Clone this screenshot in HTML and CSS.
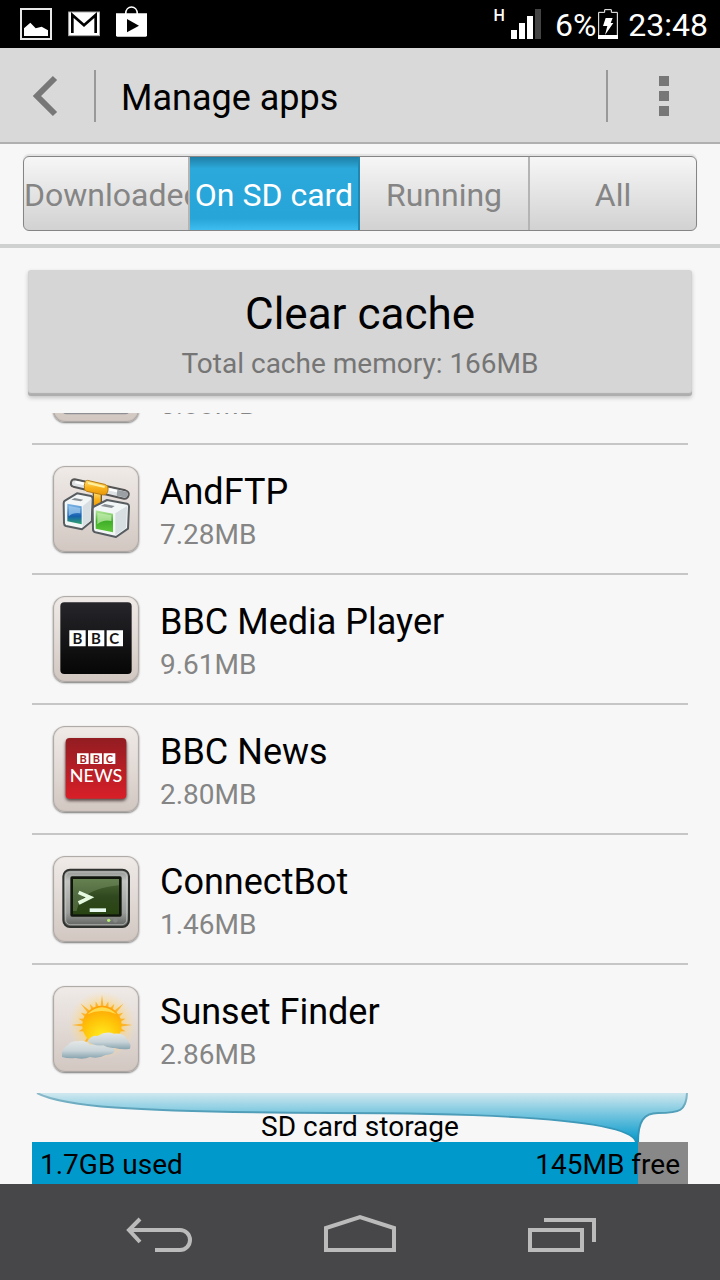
FILE: index.html
```html
<!DOCTYPE html>
<html lang="en">
<head>
<meta charset="utf-8">
<meta name="viewport" content="width=device-width, initial-scale=1">
<title>Manage apps</title>
<link rel="stylesheet" href="styles.css">
</head>
<body>
<div class="status">
  <div class="status-group notices">
    <svg width="32" height="32" viewBox="0 0 96 96"><rect x="3" y="3" width="90" height="90" fill="none" stroke="#e8e8e8" stroke-width="6"/><path d="M12 84V61l19-17 16 17 18-5 19 11v17z" fill="#fff"/></svg>
    <svg width="32" height="32" viewBox="0 0 96 96"><rect x="2" y="12" width="93" height="71" fill="#fff" stroke="#aaa" stroke-width="3"/><path d="M13 75V21l35 31 35-31v54" fill="none" stroke="#000" stroke-width="8"/></svg>
    <svg width="31" height="36" viewBox="0 0 93 108"><path d="M29 24C29-4 64-4 64 24" fill="none" stroke="#fff" stroke-width="5"/><path d="M0 22h93v66q0 4-4 4H4q-4 0-4-4z" fill="#fff"/><path d="M33 39l36 20-36 20z" fill="#000"/></svg>
  </div>
  <div class="status-group readings">
    <span class="network">H</span>
    <svg class="signal" width="30" height="30" viewBox="0 0 30 30"><path d="M0 21h6v9H0zM8 14h6v16H8zM16 7h6v23h-6z" fill="#fff"/><path d="M24 0h6v30h-6z" fill="#444"/></svg>
    <span class="reading">6%</span>
    <svg class="battery" width="20" height="30" viewBox="0 0 60 90"><path d="M2 10h18V2h20v8h18v78H2z" fill="none" stroke="#fff" stroke-width="3"/><path d="M0 78h60v12H0z" fill="#fff"/><path d="M23 27h21l-6 15h8L21 78l7-27H15z" fill="#fff"/></svg>
    <time class="reading">23:48</time>
  </div>
</div>

<header class="header">
  <button class="back" aria-label="Back"><svg width="26" height="42" viewBox="0 0 26 42"><path d="M23 3L5 21l18 18" fill="none" stroke="#777" stroke-width="6"/></svg></button>
  <h1 class="title">Manage apps</h1>
  <button class="menu" aria-label="More options"><svg width="10" height="40" viewBox="0 0 10 40"><path d="M0 0h10v10H0zM0 15h10v10H0zM0 30h10v10H0z" fill="#777"/></svg></button>
</header>

<nav class="tab-bar">
  <div class="tabs">
    <button class="tab tab-long">Downloaded</button>
    <button class="tab tab-on" aria-current="page">On SD card</button>
    <button class="tab">Running</button>
    <button class="tab">All</button>
  </div>
</nav>

<main class="content">
  <button class="clear">
    <span class="clear-title">Clear cache</span>
    <span class="clear-note">Total cache memory: 166MB</span>
  </button>

  <ul class="apps">
    <li class="app">
      <span class="tile"><svg viewBox="39 33 258 258"><rect x="66" y="72" width="204" height="194" rx="14" fill="#d8cec9" stroke="#8d8f94" stroke-width="4"/></svg></span>
      <div class="app-text"><p class="app-name"></p><p class="app-size">3.88MB</p></div>
    </li>
    <li class="app">
      <span class="tile"><svg viewBox="39 33 258 258">
        <defs>
          <linearGradient id="pipe" x1="0" y1="0" x2="0" y2="1"><stop offset="0" stop-color="#ffe27a"/><stop offset=".5" stop-color="#f9b21c"/><stop offset="1" stop-color="#e89808"/></linearGradient>
          <linearGradient id="blue" x1="0" y1="0" x2="0" y2="1"><stop offset="0" stop-color="#7fb8e8"/><stop offset=".6" stop-color="#1560b0"/><stop offset="1" stop-color="#2fa36a"/></linearGradient>
          <linearGradient id="green" x1="0" y1="0" x2="0" y2="1"><stop offset="0" stop-color="#b6e8a0"/><stop offset=".5" stop-color="#3fae28"/><stop offset="1" stop-color="#5fc83a"/></linearGradient>
        </defs>
        <path d="M160 112h24v42h-24z" fill="url(#pipe)" stroke="#6a5a38" stroke-width="4"/>
        <path d="M104 73L256 106q12 4 10 14-3 12-14 11L100 95q-9-3-7-13 2-9 11-9z" fill="#dfe3e6" stroke="#555" stroke-width="6"/>
        <path d="M106 81L252 113" stroke="#fff" stroke-width="7"/>
        <path d="M232 104l30 7q4 9-4 17l-28-6z" fill="#9ba0a4"/>
        <path d="M142 76l52 12q12 4 10 17-2 15-14 15l-50-11q-9-3-7-17 1-15 9-16z" fill="url(#pipe)" stroke="#b87c14" stroke-width="3"/>
        <path d="M144 84l50 12" stroke="#fff0a0" stroke-width="6"/>
        <path d="M75 137l36-22 42 8q5 2 5 8l-3 68-29 24-48-10q-6-2-6-8l-1-60q0-6 4-8z" fill="#f3f6f7" stroke="#565c60" stroke-width="6" stroke-linejoin="round"/>
        <path d="M128 154l25-21-2 64-23 19z" fill="#d8dfe2"/>
        <path d="M94 134l10-5 26 5-8 5z" fill="#888f94"/>
        <path d="M82 146l43 8v54l-43-9z" fill="url(#blue)"/><path d="M86 152l35 7v16q-20-4-35 9z" fill="#a6d0f2" opacity=".7"/>
        <path d="M162 155l39-20 60 11q6 2 6 8l-3 67-36 25-62-14q-7-2-7-9l-1-60q0-6 4-8z" fill="#f3f6f7" stroke="#565c60" stroke-width="6" stroke-linejoin="round"/>
        <path d="M226 175l35-22-3 66-32 22z" fill="#d8dfe2"/>
        <path d="M182 153l12-6 30 6-9 6z" fill="#888f94"/>
        <path d="M167 166l52 10v56l-52-11z" fill="url(#green)"/><path d="M172 173l42 8v17q-24-5-42 10z" fill="#c8f0b4" opacity=".7"/>
      </svg></span>
      <div class="app-text"><p class="app-name">AndFTP</p><p class="app-size">7.28MB</p></div>
    </li>
    <li class="app">
      <span class="tile"><svg viewBox="39 33 258 258">
        <defs><linearGradient id="dark" x1="0" y1="0" x2="0" y2="1"><stop offset="0" stop-color="#26252a"/><stop offset="1" stop-color="#060606"/></linearGradient></defs>
        <rect x="61" y="52" width="214" height="215" rx="12" fill="url(#dark)"/>
        <path d="M88 136h49v48H88zM144 136h49v48h-49zM200 136h49v48h-49z" fill="#fff"/>
        <g class="logo-letters" font-size="45" fill="#161616"><text x="112" y="176">B</text><text x="168" y="176">B</text><text x="223" y="176">C</text></g>
      </svg></span>
      <div class="app-text"><p class="app-name">BBC Media Player</p><p class="app-size">9.61MB</p></div>
    </li>
    <li class="app">
      <span class="tile"><svg viewBox="39 33 258 258">
        <defs><linearGradient id="red" x1="0" y1="0" x2="0" y2="1"><stop offset="0" stop-color="#921d22"/><stop offset="1" stop-color="#d81f28"/></linearGradient>
        <filter id="soft" x="-20%" y="-20%" width="140%" height="140%"><feGaussianBlur stdDeviation="4"/></filter></defs>
        <rect x="76" y="74" width="184" height="184" rx="14" fill="#41302e" opacity=".8" filter="url(#soft)"/>
        <rect x="77" y="69" width="182" height="182" rx="12" fill="url(#red)"/>
        <path d="M111 115h35v32h-35zM151 115h35v32h-35zM191 115h35v32h-35z" fill="#fff"/>
        <g class="logo-letters" font-size="33" fill="#a51e24"><text x="129" y="143">B</text><text x="169" y="143">B</text><text x="208" y="143">C</text></g>
        <text class="logo-word" x="168" y="201" font-size="54" fill="#fff">NEWS</text>
      </svg></span>
      <div class="app-text"><p class="app-name">BBC News</p><p class="app-size">2.80MB</p></div>
    </li>
    <li class="app">
      <span class="tile"><svg viewBox="39 33 258 258">
        <defs>
          <linearGradient id="case" x1="0" y1="0" x2="0" y2="1"><stop offset="0" stop-color="#8e918e"/><stop offset=".2" stop-color="#c2c4c1"/><stop offset=".75" stop-color="#9b9d9a"/><stop offset="1" stop-color="#5c5e5c"/></linearGradient>
          <linearGradient id="crt" x1="0" y1="0" x2="0" y2="1"><stop offset="0" stop-color="#4f6a38"/><stop offset=".5" stop-color="#30481e"/><stop offset="1" stop-color="#294412"/></linearGradient>
        </defs>
        <rect x="70" y="74" width="197" height="172" rx="20" fill="url(#case)" stroke="#303230" stroke-width="6"/>
        <rect x="77" y="81" width="183" height="158" rx="14" fill="none" stroke="#d0d2cf" stroke-width="3" opacity=".6"/>
        <rect x="91" y="94" width="154" height="121" rx="5" fill="#10160c"/>
        <rect x="99" y="102" width="138" height="106" fill="url(#crt)"/>
        <path d="M99 102h138v19Q160 128 128 160q-13 14-18 38H99z" fill="#9db58a" opacity=".3"/>
        <path d="M116 142l34 15-34 17" fill="none" stroke="#e4f8df" stroke-width="11"/>
        <path d="M149 190h49v11h-49z" fill="#e9faf0"/>
        <circle cx="206" cy="226" r="5" fill="#b6f070"/><circle cx="226" cy="226" r="7" fill="#858785"/>
      </svg></span>
      <div class="app-text"><p class="app-name">ConnectBot</p><p class="app-size">1.46MB</p></div>
    </li>
    <li class="app">
      <span class="tile"><svg viewBox="39 33 258 258">
        <defs>
          <radialGradient id="sun" cx=".5" cy=".8" r=".8"><stop offset="0" stop-color="#ffee20"/><stop offset=".6" stop-color="#ffc208"/><stop offset="1" stop-color="#ffa008"/></radialGradient>
          <radialGradient id="glow"><stop offset=".5" stop-color="#ffd060" stop-opacity=".8"/><stop offset="1" stop-color="#ffe0a0" stop-opacity="0"/></radialGradient>
          <linearGradient id="cloud" x1="0" y1="0" x2="0" y2="1"><stop offset="0" stop-color="#e4e8e8"/><stop offset=".55" stop-color="#c9d4d8"/><stop offset="1" stop-color="#86a3af"/></linearGradient>
          <filter id="haze" x="-10%" y="-20%" width="120%" height="140%"><feGaussianBlur stdDeviation="2"/></filter>
        </defs>
        <circle cx="186" cy="150" r="102" fill="url(#glow)"/>
        <g fill="#fbb42c">
          <path id="ray" d="M181 100l5-41 5 41z"/>
          <use href="#ray" transform="rotate(45 186 150)"/><use href="#ray" transform="rotate(90 186 150)"/><use href="#ray" transform="rotate(135 186 150)"/><use href="#ray" transform="rotate(225 186 150)"/><use href="#ray" transform="rotate(270 186 150)"/><use href="#ray" transform="rotate(315 186 150)"/>
          <path id="nub" d="M179 100l7-23 7 23z" transform="rotate(15 186 150)"/>
          <use href="#nub" transform="rotate(15 186 150)"/><use href="#nub" transform="rotate(45 186 150)"/><use href="#nub" transform="rotate(60 186 150)"/><use href="#nub" transform="rotate(90 186 150)"/><use href="#nub" transform="rotate(240 186 150)"/><use href="#nub" transform="rotate(270 186 150)"/><use href="#nub" transform="rotate(285 186 150)"/><use href="#nub" transform="rotate(315 186 150)"/><use href="#nub" transform="rotate(330 186 150)"/>
        </g>
        <circle cx="186" cy="151" r="59" fill="url(#sun)"/>
        <path d="M142 118q44-42 88 0-44-20-88 0z" fill="#ffe860" opacity=".8"/>
        <g filter="url(#haze)">
          <path d="M66 246q-4-24 17-35 9-14 30-12 22-6 37 10 30-5 56 8 18-2 18 10-3 11-27 13-22 12-47 6-17 8-44 3-20 3-40-3z" fill="url(#cloud)"/>
          <path d="M143 197q12-17 30-14 25-16 49-7 31-2 38 16 16 15 10 29-20 5-46-2-19 2-34-8-35 2-47-14z" fill="url(#cloud)"/>
        </g>
      </svg></span>
      <div class="app-text"><p class="app-name">Sunset Finder</p><p class="app-size">2.86MB</p></div>
    </li>
  </ul>

  <section class="storage">
    <div class="funnel">
      <svg class="funnel-shape" viewBox="0 0 656 49" preserveAspectRatio="none">
        <defs><linearGradient id="flow" x1="0" y1="0" x2="0" y2="1"><stop offset="0" stop-color="#d0e8ef"/><stop offset=".4" stop-color="#7cc8e0"/><stop offset=".75" stop-color="#36acd4"/><stop offset="1" stop-color="#0099cc"/></linearGradient>
        <linearGradient id="edge" x1="0" y1="0" x2="0" y2="1"><stop offset="0" stop-color="#8fbccb"/><stop offset=".4" stop-color="#4f9db8"/><stop offset="1" stop-color="#1f92ba"/></linearGradient></defs>
        <path d="M5 0C30 13 90 19 300 20C480 20 600 28 604 49H606C606 28 612 20 626 20C648 20 655 18 656 0z" fill="url(#flow)"/>
        <path d="M5 0C30 13 90 19 300 20C480 20 600 28 604 49M606 49C606 28 612 20 626 20C648 20 654 18 655 0" fill="none" stroke="url(#edge)" stroke-width="2"/>
      </svg>
      <h2 class="storage-title">SD card storage</h2>
    </div>
    <div class="meter">
      <span>1.7GB used</span>
      <span>145MB free</span>
    </div>
  </section>
</main>

<nav class="system-nav">
  <button class="key" aria-label="Back"><svg width="68" height="40" viewBox="0 0 68 40"><path d="M16 5L5 16l11 12M5 16h51a10 10 0 0 1 0 20H31" fill="none" stroke="#bbb" stroke-width="4"/></svg></button>
  <button class="key" aria-label="Home"><svg width="72" height="40" viewBox="0 0 72 40"><path d="M2 36V14L36 3l34 11v22z" fill="none" stroke="#bbb" stroke-width="4"/></svg></button>
  <button class="key" aria-label="Recent apps"><svg width="68" height="40" viewBox="0 0 68 40"><path d="M2 16h52v20H2zM16 6h50v22" fill="none" stroke="#bbb" stroke-width="4"/></svg></button>
</nav>
</body>
</html>
```
FILE: styles.css
```css
* { box-sizing: border-box; }
html, body { height: 100%; }
body {
  margin: 0;
  display: flex;
  flex-direction: column;
  background: #f7f7f7;
  color: #000;
  font-family: Roboto, "Noto Sans", sans-serif;
}
h1, h2, p, ul { margin: 0; padding: 0; font-weight: 400; }
button {
  margin: 0;
  padding: 0;
  border: 0;
  background: none;
  color: inherit;
  font: inherit;
}
svg { display: block; }

.status {
  flex: none;
  display: flex;
  justify-content: space-between;
  height: 48px;
  padding: 0 12px 0 20px;
  background: #000;
  color: #fff;
}
.status-group { display: flex; align-items: center; }
.notices { gap: 16px; }
.network { align-self: flex-start; margin: 6px 6px 0 0; font-size: 16px; line-height: 20px; font-weight: 500; }
.signal { margin-right: 14px; }
.battery { margin: 0 10px 0 2px; }
.reading { padding-top: 2px; font-size: 32px; line-height: 48px; }

.header {
  flex: none;
  display: flex;
  align-items: center;
  height: 96px;
  padding-top: 2px;
  background: #d9d9d9;
  border-bottom: 2px solid #b0b0b0;
}
.back {
  display: flex;
  align-items: center;
  width: 96px;
  height: 52px;
  padding-left: 32px;
  border-right: 2px solid #999;
}
.title { flex: 1; padding: 4px 0 0 25px; font-size: 36px; line-height: 48px; }
.menu {
  display: flex;
  align-items: center;
  justify-content: center;
  width: 114px;
  height: 52px;
  border-left: 2px solid #999;
}

.tab-bar {
  flex: none;
  padding: 12px 23px 13px;
  border-bottom: 4px solid #cfd0d0;
}
.tabs {
  display: grid;
  grid-template-columns: 83fr 85fr 85fr 83fr;
  height: 75px;
  border: 1px solid #858585;
  border-radius: 6px;
  overflow: hidden;
  background: linear-gradient(#f6f6f6, #d2d2d2);
  box-shadow: 0 -2px 1px #e2e2e2;
}
.tab {
  min-width: 0;
  overflow: hidden;
  padding-top: 3px;
  white-space: nowrap;
  border-right: 2px solid #b4b4b4;
  color: #858585;
  font-size: 32px;
  line-height: 70px;
}
.tab:last-child { border-right: 0; }
.tab-long {
  text-align: left;
}
.tab-on {
  border-color: #2187b0;
  background: linear-gradient(#1f7fa5, #2ca9db 16%, #27a4d8 84%, #3dbdf0);
  color: #fff;
}

.content {
  flex: 1;
  min-height: 0;
  display: flex;
  flex-direction: column;
  padding-top: 22px;
}
.clear {
  flex: none;
  display: flex;
  flex-direction: column;
  align-items: center;
  margin: 0 28px 17px;
  padding: 16px 0;
  height: 126px;
  border-radius: 3px;
  background: #d6d6d6;
  box-shadow: inset 0 -3px 1px #aeaeae, 0 2px 4px #c4c4c4;
}
.clear-title { font-size: 44px; line-height: 56px; }
.clear-note { color: #757575; font-size: 28px; line-height: 44px; }

.apps {
  flex: 1;
  min-height: 0;
  display: flex;
  flex-direction: column;
  justify-content: flex-end;
  overflow: hidden;
  padding: 0 32px;
  list-style: none;
}
.app {
  flex: none;
  display: flex;
  align-items: center;
  gap: 21px;
  height: 130px;
  padding-left: 21px;
  border-bottom: 2px solid #c6c6c6;
}
.app:last-child { height: 128px; border-bottom: 0; }
.tile {
  width: 86px;
  height: 86px;
  border-radius: 12px;
  background: linear-gradient(#f0ebe8, #d2c7c1);
  box-shadow: inset 0 0 1px 1px #aaa5a1, 0 1px 2px #777;
}
.app-text { padding-top: 8px; }
.app-name { min-height: 44px; font-size: 36px; line-height: 44px; }
.app-size { color: #858585; font-size: 28px; line-height: 42px; }
.logo-letters { font-family: Lato, sans-serif; font-weight: 700; text-anchor: middle; }
.logo-word { font-family: Lato, sans-serif; font-weight: 500; text-anchor: middle; }

.storage { flex: none; padding: 0 32px; }
.funnel { display: grid; height: 49px; }
.funnel-shape, .storage-title { grid-area: 1 / 1; }
.funnel-shape { width: 100%; height: 49px; }
.storage-title {
  align-self: end;
  z-index: 1;
  text-align: center;
  font-size: 28px;
  line-height: 30px;
}
.meter {
  display: flex;
  justify-content: space-between;
  padding: 4px 8px 0;
  background: linear-gradient(90deg, #0099cc 92.4%, #888 92.4%);
  font-size: 28px;
  line-height: 38px;
}

.system-nav {
  flex: none;
  display: flex;
  justify-content: center;
  gap: 2px;
  height: 96px;
  background: #474749;
}
.key {
  display: flex;
  align-items: center;
  justify-content: center;
  width: 200px;
  padding-top: 4px;
}
```
